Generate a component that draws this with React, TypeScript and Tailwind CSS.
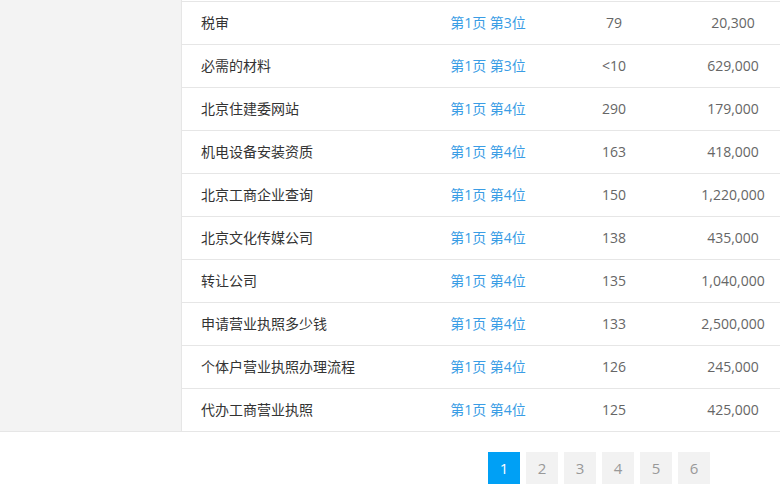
const rows = [
  { word: "税审", rank: "第1页 第3位", count: "79", volume: "20,300" },
  { word: "必需的材料", rank: "第1页 第3位", count: "<10", volume: "629,000" },
  { word: "北京住建委网站", rank: "第1页 第4位", count: "290", volume: "179,000" },
  { word: "机电设备安装资质", rank: "第1页 第4位", count: "163", volume: "418,000" },
  { word: "北京工商企业查询", rank: "第1页 第4位", count: "150", volume: "1,220,000" },
  { word: "北京文化传媒公司", rank: "第1页 第4位", count: "138", volume: "435,000" },
  { word: "转让公司", rank: "第1页 第4位", count: "135", volume: "1,040,000" },
  { word: "申请营业执照多少钱", rank: "第1页 第4位", count: "133", volume: "2,500,000" },
  { word: "个体户营业执照办理流程", rank: "第1页 第4位", count: "126", volume: "245,000" },
  { word: "代办工商营业执照", rank: "第1页 第4位", count: "125", volume: "425,000" },
]

export default function App() {
  return (
    <div
      className="w-[780px] h-[499px] bg-white text-[14px] overflow-hidden"
      style={{ fontFamily: '"Open Sans", "Noto Sans CJK SC", sans-serif' }}
    >
      <div className="flex border-b border-[#e6e6e6]">
        <div className="w-[182px] shrink-0 bg-[#f3f3f3] border-r border-[#e6e6e6]" />
        <div className="flex-1 pt-px">
          {rows.map((r) => (
            <div key={r.word} className="flex h-[43px] items-center pb-[2px] border-t border-[#e6e6e6]">
              <div className="w-[248px] pl-[19px] text-[#333]">{r.word}</div>
              <div className="w-[116px] text-center text-[#3a9de5]">{r.rank}</div>
              <div className="w-[136px] text-center text-[#666]">{r.count}</div>
              <div className="flex-1 pl-[4px] text-center text-[#666]">{r.volume}</div>
            </div>
          ))}
        </div>
      </div>
      <div className="flex gap-[6px] pl-[488px] pt-[20px]">
        {[1, 2, 3, 4, 5, 6].map((n) => (
          <div
            key={n}
            className={
              n === 1
                ? "w-[32px] h-[32px] flex items-center justify-center bg-[#00a0f5] text-white text-[15px]"
                : "w-[32px] h-[32px] flex items-center justify-center bg-[#f2f2f2] text-[#999] text-[15px]"
            }
          >
            {n}
          </div>
        ))}
      </div>
    </div>
  )
}
